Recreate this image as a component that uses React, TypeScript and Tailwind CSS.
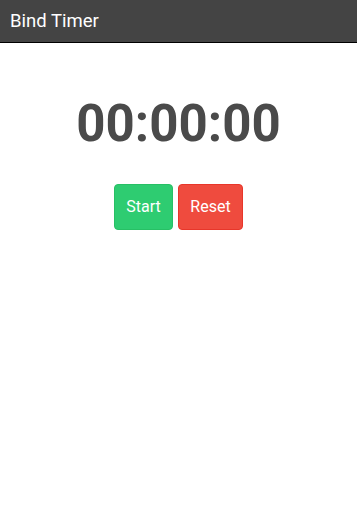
import { useState, useEffect, useRef } from 'react';

function pad(n: number) {
    return n.toString().padStart(2, '0');
}

export default function App() {
    const [seconds, setSeconds] = useState(0);
    const [running, setRunning] = useState(false);
    const timer = useRef<number | null>(null);

    useEffect(() => {
        if (!running) return;
        timer.current = window.setInterval(() => setSeconds((s) => s + 1), 1000);
        return () => {
            if (timer.current) window.clearInterval(timer.current);
        };
    }, [running]);

    const h = Math.floor(seconds / 3600);
    const m = Math.floor((seconds % 3600) / 60);
    const s = seconds % 60;

    return (
        <div className="min-h-[512px] bg-white font-['Roboto',sans-serif]">
            {/* Header */}
            <header className="h-[43px] bg-[#444444] border-b-[1.5px] border-black flex items-center px-[10px]">
                <h1 className="text-[18.5px] text-white leading-none">Bind Timer</h1>
            </header>

            <main className="flex flex-col items-center">
                <div className="mt-[49px] text-[51px] leading-[64px] font-bold text-[#4a4a4a]">
                    {pad(h)}:{pad(m)}:{pad(s)}
                </div>

                <div className="mt-[28px] flex gap-[5px]">
                    <button
                        onClick={() => setRunning(!running)}
                        className="w-[59px] h-[46px] rounded-[4px] bg-[#2ecc71] border border-[#27c065] text-white text-[16px]"
                    >
                        {running ? 'Stop' : 'Start'}
                    </button>
                    <button
                        onClick={() => {
                            setRunning(false);
                            setSeconds(0);
                        }}
                        className="w-[65px] h-[46px] rounded-[4px] bg-[#ef4b3e] border border-[#e8362a] text-white text-[16px]"
                    >
                        Reset
                    </button>
                </div>
            </main>
        </div>
    );
}
